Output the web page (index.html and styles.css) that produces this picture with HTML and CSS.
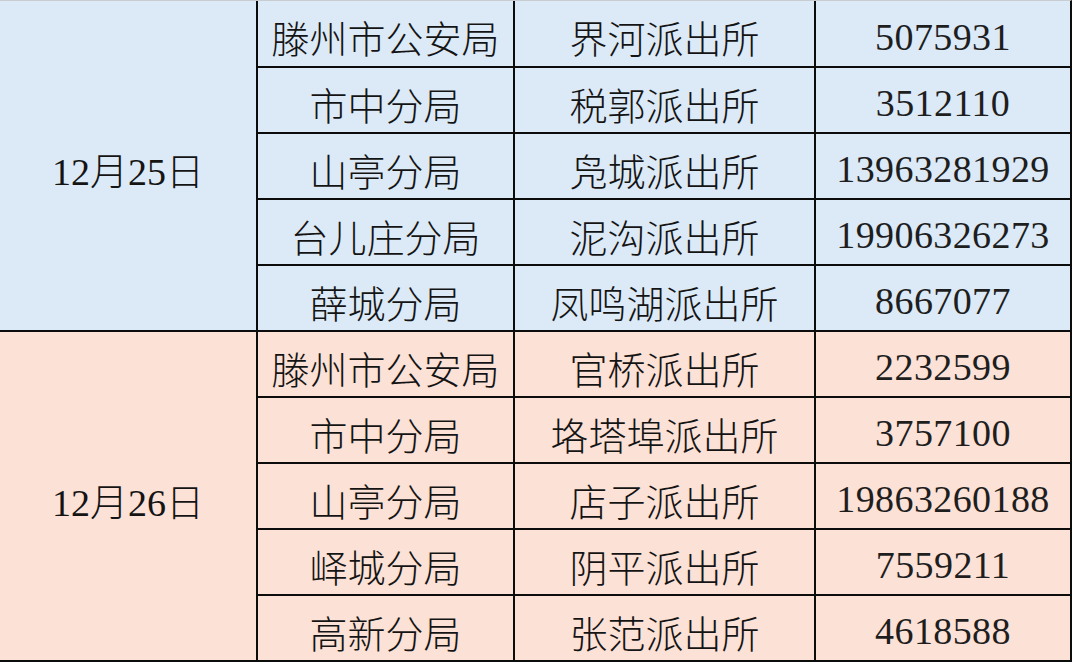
FILE: index.html
```html
<!DOCTYPE html>
<html lang="zh-CN">
<head>
<meta charset="utf-8">
<title>值班表</title>
<link rel="stylesheet" href="styles.css">
</head>
<body>
<div class="table">
  <div class="cell date blue span5">12月25日</div>
  <div class="cell blue">滕州市公安局</div>
  <div class="cell blue">界河派出所</div>
  <div class="cell blue num">5075931</div>
  <div class="cell blue">市中分局</div>
  <div class="cell blue">税郭派出所</div>
  <div class="cell blue num">3512110</div>
  <div class="cell blue">山亭分局</div>
  <div class="cell blue">凫城派出所</div>
  <div class="cell blue num">13963281929</div>
  <div class="cell blue">台儿庄分局</div>
  <div class="cell blue">泥沟派出所</div>
  <div class="cell blue num">19906326273</div>
  <div class="cell blue">薛城分局</div>
  <div class="cell blue">凤鸣湖派出所</div>
  <div class="cell blue num">8667077</div>

  <div class="cell date peach span5">12月26日</div>
  <div class="cell peach">滕州市公安局</div>
  <div class="cell peach">官桥派出所</div>
  <div class="cell peach num">2232599</div>
  <div class="cell peach">市中分局</div>
  <div class="cell peach">垎塔埠派出所</div>
  <div class="cell peach num">3757100</div>
  <div class="cell peach">山亭分局</div>
  <div class="cell peach">店子派出所</div>
  <div class="cell peach num">19863260188</div>
  <div class="cell peach">峄城分局</div>
  <div class="cell peach">阴平派出所</div>
  <div class="cell peach num">7559211</div>
  <div class="cell peach">高新分局</div>
  <div class="cell peach">张范派出所</div>
  <div class="cell peach num">4618588</div>
</div>
</body>
</html>
```
FILE: styles.css
```css
html, body {
  margin: 0;
  padding: 0;
  background: #ffffff;
}
.table {
  width: 1072px;
  height: 662px;
  box-sizing: border-box;
  display: grid;
  grid-template-columns: 256px 255px 299px 254px;
  grid-template-rows: 65px repeat(9, 64px);
  gap: 2px;
  background: #0c0c0c;
  border-top: 1px solid #c9cdd2;
  border-right: 2px solid #0c0c0c;
  border-bottom: 2px solid #0c0c0c;
  font-family: "Liberation Serif", "Noto Sans CJK SC", serif;
  font-size: 38px;
  color: #141414;
}
.cell {
  display: flex;
  align-items: center;
  justify-content: center;
  padding-top: 6px;
  box-sizing: border-box;
  white-space: nowrap;
  font-weight: 300;
}
.span5 {
  grid-row: span 5;
}
.blue {
  background: #dce9f6;
}
.peach {
  background: #fce1d6;
}
.num {
  letter-spacing: 0.4px;
  font-weight: 400;
  color: #1e1e1e;
}
```
